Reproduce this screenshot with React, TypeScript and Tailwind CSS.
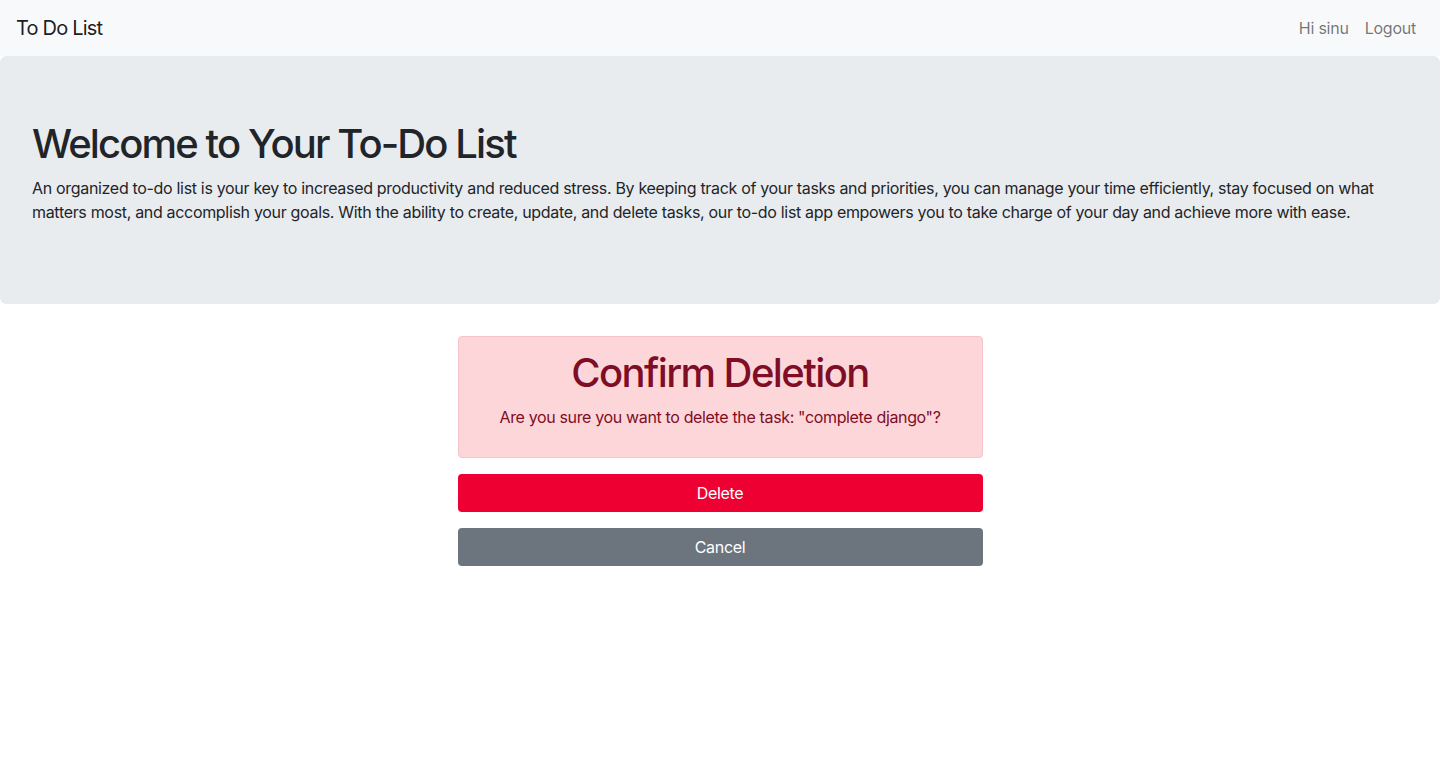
export default function App() {
  return (
    <div className="min-h-[783px] bg-white text-[#212529]" style={{ fontFamily: 'Inter, "Noto Sans", sans-serif' }}>
      <nav className="h-[56px] bg-[#f8f9fa] flex items-center justify-between px-4">
        <span className="text-[20px] text-black/90 leading-[30px] tracking-[-0.04em]">To Do List</span>
        <div className="flex items-center gap-4 pr-[8px] text-[16px] text-black/55 tracking-[-0.015em]">
          <span>Hi sinu</span>
          <span>Logout</span>
        </div>
      </nav>
      <div className="bg-[#e9ecef] rounded-md px-8 pt-[64px] pb-[64px]">
        <h1 className="text-[40px] font-medium leading-[48px] mb-2 tracking-[-0.047em]">Welcome to Your To-Do List</h1>
        <p className="text-[16px] leading-[24px] mb-4 tracking-[-0.02em]">
          An organized to-do list is your key to increased productivity and reduced stress. By keeping track of your tasks and priorities, you can manage your time efficiently, stay focused on what matters most, and accomplish your goals. With the ability to create, update, and delete tasks, our to-do list app empowers you to take charge of your day and achieve more with ease.
        </p>
      </div>
      <div className="flex justify-center pt-8">
        <div className="w-[525px] flex flex-col gap-4">
          <div className="bg-[#fdd6da] border border-[#f8c2c9] rounded-[4px] text-[#7e0d25] text-center pt-3 pb-3">
            <h1 className="text-[40px] font-medium leading-[48px] mb-2 tracking-[-0.04em]">Confirm Deletion</h1>
            <p className="text-[16px] leading-[24px] mb-4 tracking-[-0.022em]">Are you sure you want to delete the task: "complete django"?</p>
          </div>
          <button className="h-[38px] w-full rounded-[4px] bg-[#ef0033] text-white text-[16px] tracking-[-0.02em]">Delete</button>
          <button className="h-[38px] w-full rounded-[4px] bg-[#6c757d] text-white text-[16px] tracking-[-0.02em]">Cancel</button>
        </div>
      </div>
    </div>
  );
}
